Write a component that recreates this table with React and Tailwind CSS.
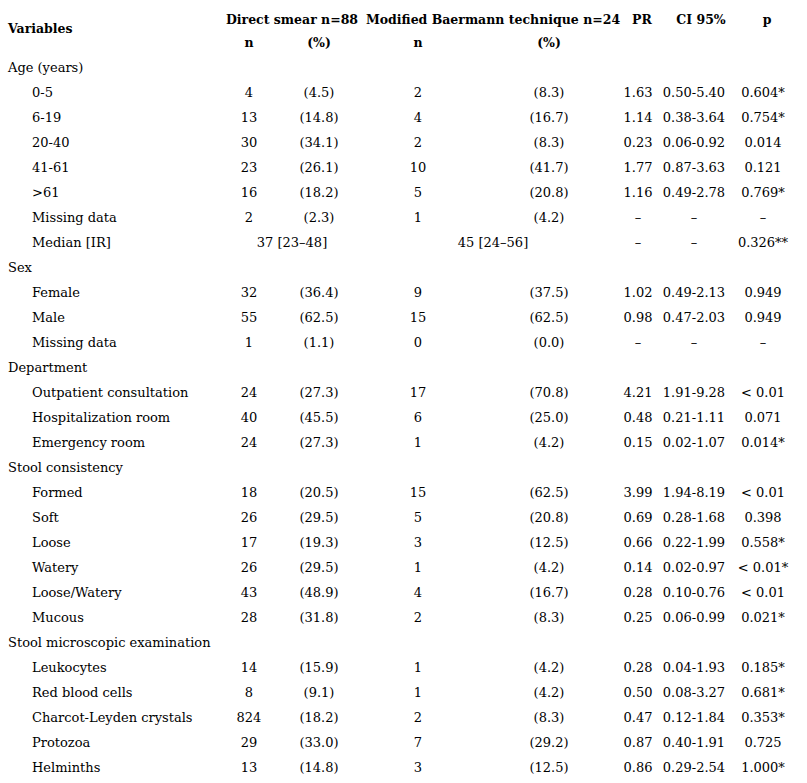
const rows = [
  { type: "group", label: "Age (years)" },
  { label: "0-5", n1: "4", p1: "(4.5)", n2: "2", p2: "(8.3)", pr: "1.63", ci: "0.50-5.40", p: "0.604*" },
  { label: "6-19", n1: "13", p1: "(14.8)", n2: "4", p2: "(16.7)", pr: "1.14", ci: "0.38-3.64", p: "0.754*" },
  { label: "20-40", n1: "30", p1: "(34.1)", n2: "2", p2: "(8.3)", pr: "0.23", ci: "0.06-0.92", p: "0.014" },
  { label: "41-61", n1: "23", p1: "(26.1)", n2: "10", p2: "(41.7)", pr: "1.77", ci: "0.87-3.63", p: "0.121" },
  { label: ">61", n1: "16", p1: "(18.2)", n2: "5", p2: "(20.8)", pr: "1.16", ci: "0.49-2.78", p: "0.769*" },
  { label: "Missing data", n1: "2", p1: "(2.3)", n2: "1", p2: "(4.2)", pr: "–", ci: "–", p: "–" },
  { label: "Median [IR]", span1: "37 [23–48]", span2: "45 [24–56]", pr: "–", ci: "–", p: "0.326**" },
  { type: "group", label: "Sex" },
  { label: "Female", n1: "32", p1: "(36.4)", n2: "9", p2: "(37.5)", pr: "1.02", ci: "0.49-2.13", p: "0.949" },
  { label: "Male", n1: "55", p1: "(62.5)", n2: "15", p2: "(62.5)", pr: "0.98", ci: "0.47-2.03", p: "0.949" },
  { label: "Missing data", n1: "1", p1: "(1.1)", n2: "0", p2: "(0.0)", pr: "–", ci: "–", p: "–" },
  { type: "group", label: "Department" },
  { label: "Outpatient consultation", n1: "24", p1: "(27.3)", n2: "17", p2: "(70.8)", pr: "4.21", ci: "1.91-9.28", p: "< 0.01" },
  { label: "Hospitalization room", n1: "40", p1: "(45.5)", n2: "6", p2: "(25.0)", pr: "0.48", ci: "0.21-1.11", p: "0.071" },
  { label: "Emergency room", n1: "24", p1: "(27.3)", n2: "1", p2: "(4.2)", pr: "0.15", ci: "0.02-1.07", p: "0.014*" },
  { type: "group", label: "Stool consistency" },
  { label: "Formed", n1: "18", p1: "(20.5)", n2: "15", p2: "(62.5)", pr: "3.99", ci: "1.94-8.19", p: "< 0.01" },
  { label: "Soft", n1: "26", p1: "(29.5)", n2: "5", p2: "(20.8)", pr: "0.69", ci: "0.28-1.68", p: "0.398" },
  { label: "Loose", n1: "17", p1: "(19.3)", n2: "3", p2: "(12.5)", pr: "0.66", ci: "0.22-1.99", p: "0.558*" },
  { label: "Watery", n1: "26", p1: "(29.5)", n2: "1", p2: "(4.2)", pr: "0.14", ci: "0.02-0.97", p: "< 0.01*" },
  { label: "Loose/Watery", n1: "43", p1: "(48.9)", n2: "4", p2: "(16.7)", pr: "0.28", ci: "0.10-0.76", p: "< 0.01" },
  { label: "Mucous", n1: "28", p1: "(31.8)", n2: "2", p2: "(8.3)", pr: "0.25", ci: "0.06-0.99", p: "0.021*" },
  { type: "group", label: "Stool microscopic examination" },
  { label: "Leukocytes", n1: "14", p1: "(15.9)", n2: "1", p2: "(4.2)", pr: "0.28", ci: "0.04-1.93", p: "0.185*" },
  { label: "Red blood cells", n1: "8", p1: "(9.1)", n2: "1", p2: "(4.2)", pr: "0.50", ci: "0.08-3.27", p: "0.681*" },
  { label: "Charcot-Leyden crystals", n1: "824", p1: "(18.2)", n2: "2", p2: "(8.3)", pr: "0.47", ci: "0.12-1.84", p: "0.353*" },
  { label: "Protozoa", n1: "29", p1: "(33.0)", n2: "7", p2: "(29.2)", pr: "0.87", ci: "0.40-1.91", p: "0.725" },
  { label: "Helminths", n1: "13", p1: "(14.8)", n2: "3", p2: "(12.5)", pr: "0.86", ci: "0.29-2.54", p: "1.000*" },
];

const grid = "grid grid-cols-[222px_54px_86px_112px_150px_28px_84px_54px]";

const Cell = ({ children, className = "" }) => (
  <div className={`flex items-center justify-center whitespace-nowrap ${className}`}>{children}</div>
);

export default function App() {
  return (
    <div className="bg-white text-black w-[807px] pt-2 text-[13px] font-['DejaVu_Serif',serif]">
      {/* header */}
      <div className={`${grid} grid-rows-[24px_23px] font-bold text-[12.5px]`}>
        <div className="row-span-2 flex items-center pl-2 pb-1">Variables</div>
        <Cell className="col-span-2">Direct smear n=88</Cell>
        <Cell className="col-span-2">Modified Baermann technique n=24</Cell>
        <Cell className="pl-2">PR</Cell>
        <Cell className="pl-[14px]">CI 95%</Cell>
        <Cell className="pl-2">p</Cell>
        <Cell>n</Cell>
        <Cell>(%)</Cell>
        <Cell>n</Cell>
        <Cell>(%)</Cell>
      </div>

      {rows.map((r, i) =>
        r.type === "group" ? (
          <div key={i} className="h-[25px] flex items-center pl-2">
            {r.label}
          </div>
        ) : (
          <div key={i} className={`${grid} h-[25px]`}>
            <div className="flex items-center pl-8 whitespace-nowrap">{r.label}</div>
            {r.span1 ? (
              <>
                <Cell className="col-span-2">{r.span1}</Cell>
                <Cell className="col-span-2">{r.span2}</Cell>
              </>
            ) : (
              <>
                <Cell>{r.n1}</Cell>
                <Cell>{r.p1}</Cell>
                <Cell>{r.n2}</Cell>
                <Cell>{r.p2}</Cell>
              </>
            )}
            <Cell>{r.pr}</Cell>
            <Cell>{r.ci}</Cell>
            <Cell>{r.p}</Cell>
          </div>
        )
      )}
    </div>
  );
}
